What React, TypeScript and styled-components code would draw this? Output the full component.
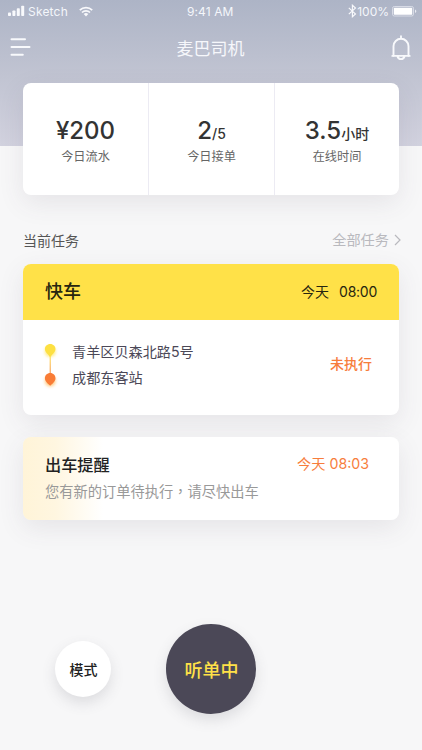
import React from 'react';
import styled, { createGlobalStyle } from 'styled-components';

const sans = `Inter, "Noto Sans CJK SC", sans-serif`;

const GlobalStyle = createGlobalStyle`
  * { box-sizing: border-box; }
  body { margin: 0; background: #f7f7f8; font-family: ${sans}; }
`;

const Screen = styled.div`
  width: 422px;
  height: 750px;
  overflow: hidden;
  display: flex;
  flex-direction: column;
  background: linear-gradient(#adb4c6, #c1c4d2 76px, #d2d2df 146px, #f7f7f8 146px);
`;

const StatusBar = styled.div`
  height: 24px;
  padding: 0 5px 0 8px;
  display: grid;
  grid-template-columns: 179px auto 1fr;
  align-items: center;
  color: #f4f6fb;
  font-size: 12px;
  line-height: 24px;
`;

const StatusGroup = styled.div<{ $end?: boolean }>`
  display: flex;
  align-items: center;
  justify-content: ${(p) => (p.$end ? 'flex-end' : 'flex-start')};
  svg { display: block; margin-bottom: 2px; }
`;

const StatusText = styled.span<{ $spacing?: number }>`
  letter-spacing: ${(p) => p.$spacing ?? 0}px;
  white-space: nowrap;
`;

const NavBar = styled.header`
  height: 59px;
  padding: 0 11px 0 10px;
  display: grid;
  grid-template-columns: 1fr auto 1fr;
  align-items: start;
`;

const NavTitle = styled.h1`
  margin: 12px 0 0;
  font-size: 17px;
  line-height: 26px;
  font-weight: 400;
  color: #f6f7fb;
`;

const IconButton = styled.button<{ $end?: boolean }>`
  display: block;
  padding: 0;
  border: 0;
  background: none;
  line-height: 0;
  margin-top: ${(p) => (p.$end ? 11 : 13)}px;
  justify-self: ${(p) => (p.$end ? 'end' : 'start')};
`;

const Card = styled.section`
  margin: 0 23px;
  border-radius: 8px;
  background: #fff;
  box-shadow: 0 8px 26px rgba(75, 72, 87, 0.1);
  overflow: hidden;
  flex: none;
`;

const StatsCard = styled(Card)`
  height: 112px;
  display: grid;
  grid-template-columns: 125px 126px 125px;
`;

const Stat = styled.div`
  display: flex;
  flex-direction: column;
  align-items: center;
  padding-top: 32px;
  & + & { border-left: 1px solid #ecebf3; }
`;

const StatValue = styled.div`
  height: 33px;
  font-size: 24px;
  line-height: 32px;
  font-weight: 500;
  color: #333;
  white-space: nowrap;
  display: flex;
  align-items: baseline;
`;

const StatUnit = styled.span`
  font-size: 14px;
  font-weight: 500;
`;

const StatLabel = styled.div`
  height: 18px;
  font-size: 12.2px;
  line-height: 18px;
  color: #666;
`;

const SectionHead = styled.div`
  margin: 34px 21px 0 23px;
  height: 35px;
  display: flex;
  justify-content: space-between;
  align-items: flex-start;
`;

const SectionTitle = styled.h2`
  margin: 1px 0 0;
  font-size: 14px;
  line-height: 22px;
  font-weight: 400;
  color: #555;
`;

const MoreLink = styled.a`
  display: flex;
  align-items: center;
  gap: 5px;
  font-size: 14.2px;
  line-height: 22px;
  color: #b9b9be;
`;

const TaskCard = styled(Card)`
  height: 151px;
`;

const TaskHead = styled.div`
  height: 56px;
  padding: 0 22px;
  display: flex;
  align-items: center;
  justify-content: space-between;
  background: #ffe148;
  color: #26250f;
`;

const TaskKind = styled.h3`
  margin: 0;
  font-size: 18px;
  line-height: 26px;
  font-weight: 500;
`;

const TaskTime = styled.div`
  display: flex;
  gap: 10px;
  font-size: 14px;
  line-height: 22px;
`;

const Clock = styled.span`
  letter-spacing: -0.25px;
`;

const TaskBody = styled.div`
  height: 95px;
  padding: 19px 27px 0 17px;
  display: flex;
  align-items: flex-start;
`;

const RouteSlot = styled.div`
  padding-top: 1px;
  line-height: 0;
`;

const Stops = styled.div`
  flex: 1;
  margin-left: 12px;
`;

const Stop = styled.div`
  height: 26px;
  font-size: 14.15px;
  line-height: 26px;
  color: #4b4857;
`;

const TaskState = styled.div`
  margin-top: 14px;
  font-size: 14px;
  line-height: 22px;
  font-weight: 500;
  color: #f77d3c;
`;

const NoticeCard = styled(Card)`
  height: 83px;
  margin-top: 22px;
  padding: 16px 30px 0 22px;
  background: linear-gradient(90deg, #fff4d8 0, #fff6e0 32px, #fff 80px);
`;

const NoticeTop = styled.div`
  display: flex;
  justify-content: space-between;
  height: 27px;
`;

const NoticeTitle = styled.h3`
  margin: 0;
  font-size: 16.2px;
  line-height: 25px;
  font-weight: 500;
  color: #222;
`;

const NoticeTime = styled.div`
  font-size: 14.2px;
  line-height: 22px;
  color: #f77d3c;
`;

const NoticeText = styled.p`
  margin: 0;
  font-size: 14.25px;
  line-height: 22px;
  color: #999;
`;

const MidComma = styled.span`
  font-family: "Noto Sans CJK TC", sans-serif;
`;

const Actions = styled.footer`
  margin: 104px 0 0 55.4px;
  display: flex;
  align-items: center;
  gap: 55px;
`;

const RoundButton = styled.button<{ $main?: boolean }>`
  flex: none;
  width: ${(p) => (p.$main ? 90 : 56)}px;
  height: ${(p) => (p.$main ? 90 : 56)}px;
  padding: 0 0 1px;
  border: 0;
  border-radius: 50%;
  font-family: ${sans};
  font-weight: 500;
  font-size: ${(p) => (p.$main ? 18 : 14)}px;
  color: ${(p) => (p.$main ? '#ffe148' : '#222')};
  background: ${(p) => (p.$main ? '#4b4857' : '#fff')};
  box-shadow: 0 6px 14px rgba(75, 72, 87, 0.15);
`;

const SignalIcon = () => (
  <svg width="17" height="12" viewBox="0 0 17 12" fill="#f8f9fc">
    <rect x="0" y="7.5" width="3" height="3.5" rx=".8" />
    <rect x="4.4" y="5.5" width="3" height="5.5" rx=".8" />
    <rect x="8.8" y="3.2" width="3" height="7.8" rx=".8" />
    <rect x="13.2" y="0.8" width="3" height="10.2" rx=".8" />
  </svg>
);

const WifiIcon = () => (
  <svg width="14" height="11" viewBox="0 0 14 11" fill="none" stroke="#f8f9fc" strokeWidth="1.7">
    <path d="M.8 4.2a8.800 8.800 0 0 1 12.400 0" />
    <path d="M3 6.500a5.700 5.700 0 0 1 8 0" />
    <path d="M4.700 8.100a3.300 3.300 0 0 1 4.600 0L7 10.400z" fill="#f8f9fc" stroke="none" />
  </svg>
);

const BluetoothIcon = () => (
  <svg width="9" height="14" viewBox="0 0 9 14" fill="none" stroke="#f8f9fc" strokeWidth="1.15">
    <path d="M.8 3.800l6.700 6.200L4.400 12.800V1.200L7.500 4 .8 10.200" />
  </svg>
);

const BatteryIcon = () => (
  <svg width="25" height="11" viewBox="0 0 25 11">
    <rect x=".5" y=".5" width="21" height="9.5" rx="1.8" fill="none" stroke="#e2e5ed" strokeWidth=".8" />
    <rect x="1.8" y="1.8" width="18.4" height="6.9" rx=".6" fill="#fff" />
    <path d="M23 3.600c1.800.5 1.800 2.800 0 3.400z" fill="#e9ebf2" />
  </svg>
);

const MenuIcon = () => (
  <svg width="21" height="20" viewBox="0 0 21 20" stroke="#f8f9fc" strokeWidth="2" strokeLinecap="round">
    <path d="M1.500 2.200h13.500M1.500 10h18M1.500 17.800h11.300" />
  </svg>
);

const BellIcon = () => (
  <svg width="20" height="26" viewBox="0 0 20 26" fill="none" stroke="#f8f9fc" strokeWidth="1.9" strokeLinecap="round">
    <path d="M10 1.200v2M2.500 20.700v-9.400a7.500 7.500 0 0 1 15 0v9.400" />
    <path d="M1.300 20.900h17.400M6.500 21.400c1.100 3.600 5.900 3.600 7 0" />
  </svg>
);

const ChevronIcon = () => (
  <svg width="7" height="12" viewBox="0 0 7 12" fill="none" stroke="#b9b9be" strokeWidth="1.2">
    <path d="M1 1l5 5-5 5" />
  </svg>
);

const RouteIcon = () => (
  <svg width="20" height="56" viewBox="0 0 20 56">
    <defs>
      <linearGradient id="routeLine" x1="0" y1="0" x2="0" y2="1">
        <stop offset="0" stopColor="#ffe148" />
        <stop offset="1" stopColor="#f77d3c" />
      </linearGradient>
      <filter id="glow" x="-60%" y="-60%" width="220%" height="220%">
        <feGaussianBlur stdDeviation="1.8" />
      </filter>
    </defs>
    <g opacity=".6" filter="url(#glow)">
      <circle cx="10.200" cy="11.500" r="5.500" fill="#ffe148" />
      <circle cx="10.200" cy="41" r="5.500" fill="#ffb040" />
    </g>
    <rect x="9.700" y="16" width="1" height="20" fill="url(#routeLine)" />
    <path d="M10.200 3.900c3.100 0 5.300 2.300 5.300 5.100 0 3.700-3.600 4.800-4.400 7.600h-1.800c-.8-2.800-4.400-3.900-4.400-7.600 0-2.800 2.200-5.100 5.300-5.100z" fill="#fde042" />
    <path d="M10.200 33.100c3.100 0 5.300 2.300 5.300 5.200 0 3.400-3.300 5.600-5.300 7.500-2-1.900-5.300-4.100-5.300-7.500 0-2.900 2.200-5.200 5.300-5.200z" fill="#f97c36" />
  </svg>
);

const WifiSlot = styled.span`
  margin-left: 11px;
  line-height: 0;
`;

const CarrierName = styled(StatusText)`
  margin-left: 3px;
`;

const BatterySlot = styled.span`
  margin-left: 3px;
  line-height: 0;
`;

const stats = [
  { value: '¥200', unit: '', label: '今日流水' },
  { value: '2', unit: '/5', label: '今日接单' },
  { value: '3.5', unit: '小时', label: '在线时间' },
];

export default function App() {
  return (
    <>
      <GlobalStyle />
      <Screen>
        <StatusBar>
          <StatusGroup>
            <SignalIcon />
            <CarrierName $spacing={0.2}>Sketch</CarrierName>
            <WifiSlot><WifiIcon /></WifiSlot>
          </StatusGroup>
          <StatusText $spacing={0.1}>9:41 AM</StatusText>
          <StatusGroup $end>
            <BluetoothIcon />
            <StatusText>100%</StatusText>
            <BatterySlot><BatteryIcon /></BatterySlot>
          </StatusGroup>
        </StatusBar>
        <NavBar>
          <IconButton aria-label="菜单"><MenuIcon /></IconButton>
          <NavTitle>麦巴司机</NavTitle>
          <IconButton $end aria-label="通知"><BellIcon /></IconButton>
        </NavBar>
        <StatsCard>
          {stats.map((s) => (
            <Stat key={s.label}>
              <StatValue>
                {s.value}
                {s.unit && <StatUnit>{s.unit}</StatUnit>}
              </StatValue>
              <StatLabel>{s.label}</StatLabel>
            </Stat>
          ))}
        </StatsCard>
        <SectionHead>
          <SectionTitle>当前任务</SectionTitle>
          <MoreLink>全部任务<ChevronIcon /></MoreLink>
        </SectionHead>
        <TaskCard>
          <TaskHead>
            <TaskKind>快车</TaskKind>
            <TaskTime><span>今天</span><Clock>08:00</Clock></TaskTime>
          </TaskHead>
          <TaskBody>
            <RouteSlot><RouteIcon /></RouteSlot>
            <Stops>
              <Stop>青羊区贝森北路5号</Stop>
              <Stop>成都东客站</Stop>
            </Stops>
            <TaskState>未执行</TaskState>
          </TaskBody>
        </TaskCard>
        <NoticeCard>
          <NoticeTop>
            <NoticeTitle>出车提醒</NoticeTitle>
            <NoticeTime>今天 08:03</NoticeTime>
          </NoticeTop>
          <NoticeText>您有新的订单待执行<MidComma>，</MidComma>请尽快出车</NoticeText>
        </NoticeCard>
        <Actions>
          <RoundButton>模式</RoundButton>
          <RoundButton $main>听单中</RoundButton>
        </Actions>
      </Screen>
    </>
  );
}
